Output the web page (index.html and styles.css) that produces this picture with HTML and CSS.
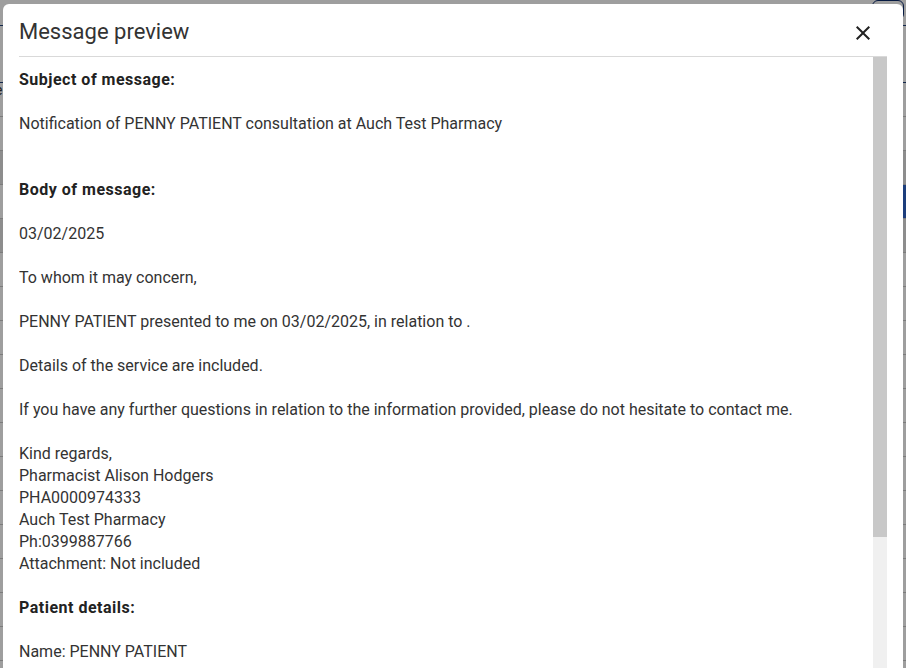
FILE: index.html
```html
<!DOCTYPE html>
<html lang="en">
<head>
<meta charset="utf-8">
<title>Message preview</title>
<link rel="stylesheet" href="styles.css">
</head>
<body>
<div class="page">
  <div class="page-top">
    <span class="page-btn"></span>
  </div>
  <div class="page-head"></div>
  <div class="rows">
    <div class="row"><span class="cell-mark">e</span></div>
    <div class="row"></div>
    <div class="row shade"></div>
    <div class="row"><span class="row-btn"></span></div>
    <div class="row shade"></div>
    <div class="row"></div>
    <div class="row"></div>
    <div class="row"></div>
    <div class="row"></div>
    <div class="row"></div>
    <div class="row"></div>
    <div class="row"></div>
    <div class="row"></div>
    <div class="row"></div>
    <div class="row"></div>
    <div class="row"></div>
    <div class="row"></div>
  </div>
</div>

<div class="overlay">
  <div class="dialog" role="dialog" aria-label="Message preview">
    <div class="dialog-header">
      <h2 class="dialog-title">Message preview</h2>
      <button class="close-btn" aria-label="Close">
        <svg width="24" height="24" viewBox="0 0 24 24" aria-hidden="true">
          <path d="M19 6.41 17.59 5 12 10.59 6.41 5 5 6.41 10.59 12 5 17.59 6.41 19 12 13.41 17.59 19 19 17.59 13.41 12z" fill="#222"/>
        </svg>
      </button>
    </div>
    <div class="dialog-body">
      <div class="scroll-area">
        <div class="message">
          <p class="heading">Subject of message:</p>
          <p class="gap2">Notification of PENNY PATIENT consultation at Auch Test Pharmacy</p>
          <p class="heading">Body of message:</p>
          <p>03/02/2025</p>
          <p>To whom it may concern,</p>
          <p>PENNY PATIENT presented to me on 03/02/2025, in relation to .</p>
          <p>Details of the service are included.</p>
          <p>If you have any further questions in relation to the information provided, please do not hesitate to contact me.</p>
          <p>Kind regards,<br>Pharmacist Alison Hodgers<br>PHA0000974333<br>Auch Test Pharmacy<br>Ph:0399887766<br>Attachment: Not included</p>
          <p class="heading">Patient details:</p>
          <p>Name: PENNY PATIENT</p>
        </div>
      </div>
      <div class="scrollbar" aria-hidden="true">
        <div class="scrollbar-thumb"></div>
      </div>
    </div>
  </div>
</div>
</body>
</html>
```

FILE: styles.css
```css
html, body {
  margin: 0;
  padding: 0;
  height: 100%;
  overflow: hidden;
}

body {
  background: #ffffff;
  font-family: Roboto, "Liberation Sans", Arial, sans-serif;
}

/* underlying page (dimmed by overlay) */
.page {
  height: 100%;
}

.page-top {
  height: 25px;
  display: flex;
  justify-content: flex-end;
  border-bottom: 1px solid #1f3f7a;
}

.page-btn {
  width: 30px;
  height: 18px;
  margin-right: 2px;
  border: 1px solid #0c2a6b;
  border-radius: 6px;
}

.page-head {
  height: 56px;
  border-bottom: 1px solid #1f3f7a;
}

.rows {
  display: flex;
  flex-direction: column;
}

.row {
  height: 33px;
  border-bottom: 1px solid #c9c9c9;
  display: flex;
  justify-content: flex-end;
  align-items: center;
}

.row.shade {
  background: #e4e4e4;
}

.cell-mark {
  margin-right: auto;
  margin-left: -5px;
  align-self: flex-start;
  font-size: 14px;
  line-height: 14px;
  color: #333;
}

.row-btn {
  width: 40px;
  height: 33px;
  background: #2f64c9;
}

/* overlay + dialog */
.overlay {
  position: fixed;
  inset: 0;
  background: rgba(0, 0, 0, 0.38);
  padding: 4px 0 0 3px;
}

.dialog {
  width: 900px;
  height: 720px;
  background: #ffffff;
  border-radius: 6px;
  padding: 0 16px;
  box-sizing: border-box;
  display: flex;
  flex-direction: column;
}

.dialog-header {
  height: 48px;
  padding-top: 4px;
  border-bottom: 1px solid #d9d9d9;
  display: flex;
  align-items: center;
  justify-content: space-between;
}

.dialog-title {
  margin: 0;
  font-size: 22px;
  line-height: 26px;
  font-weight: 400;
  color: #333333;
}

.close-btn {
  width: 24px;
  height: 24px;
  margin-right: 12px;
  margin-top: 2px;
  padding: 0;
  border: 0;
  background: transparent;
  display: flex;
  cursor: pointer;
}

.dialog-body {
  height: 611px;
  display: flex;
}

.scroll-area {
  flex: 1;
  overflow: hidden;
}

.scrollbar {
  width: 14px;
  background: #f0f0f0;
  display: flex;
  flex-direction: column;
}

.scrollbar-thumb {
  height: 480px;
  background: #c8c8c8;
}

.message {
  padding-top: 12px;
  font-size: 16px;
  line-height: 22px;
  color: #333333;
}

.message p {
  margin: 0 0 22px;
}

.message p.gap2 {
  margin-bottom: 44px;
}

.message p.heading {
  font-weight: 700;
  letter-spacing: 0.5px;
  color: #222222;
}
```
